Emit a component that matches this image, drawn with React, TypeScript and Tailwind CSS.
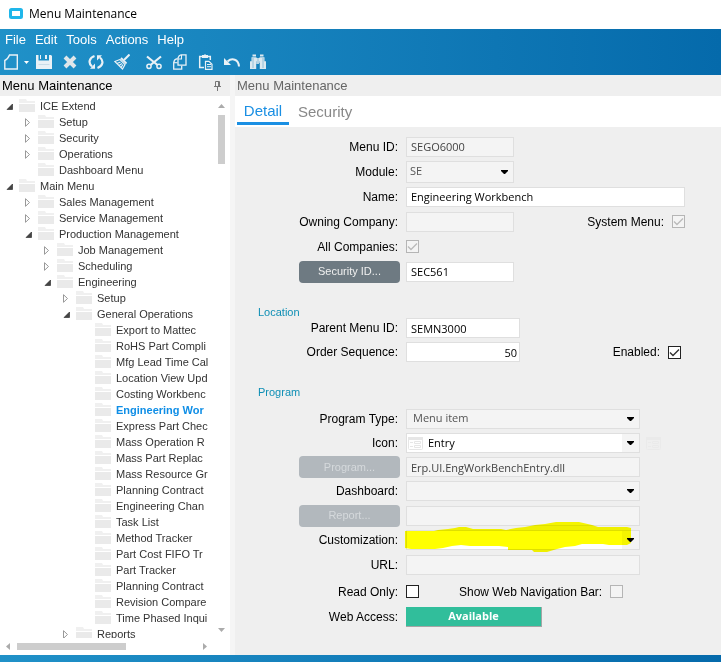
import { useState, type ReactNode } from "react";

type TreeNode = {
  label: string;
  level: number;
  state?: "open" | "closed";
};

const TREE: TreeNode[] = [
  { label: "ICE Extend", level: 0, state: "open" },
  { label: "Setup", level: 1, state: "closed" },
  { label: "Security", level: 1, state: "closed" },
  { label: "Operations", level: 1, state: "closed" },
  { label: "Dashboard Menu", level: 1 },
  { label: "Main Menu", level: 0, state: "open" },
  { label: "Sales Management", level: 1, state: "closed" },
  { label: "Service Management", level: 1, state: "closed" },
  { label: "Production Management", level: 1, state: "open" },
  { label: "Job Management", level: 2, state: "closed" },
  { label: "Scheduling", level: 2, state: "closed" },
  { label: "Engineering", level: 2, state: "open" },
  { label: "Setup", level: 3, state: "closed" },
  { label: "General Operations", level: 3, state: "open" },
  { label: "Export to Mattec", level: 4 },
  { label: "RoHS Part Compli", level: 4 },
  { label: "Mfg Lead Time Cal", level: 4 },
  { label: "Location View Upd", level: 4 },
  { label: "Costing Workbenc", level: 4 },
  { label: "Engineering Wor", level: 4 },
  { label: "Express Part Chec", level: 4 },
  { label: "Mass Operation R", level: 4 },
  { label: "Mass Part Replac", level: 4 },
  { label: "Mass Resource Gr", level: 4 },
  { label: "Planning Contract", level: 4 },
  { label: "Engineering Chan", level: 4 },
  { label: "Task List", level: 4 },
  { label: "Method Tracker", level: 4 },
  { label: "Part Cost FIFO Tr", level: 4 },
  { label: "Part Tracker", level: 4 },
  { label: "Planning Contract", level: 4 },
  { label: "Revision Compare", level: 4 },
  { label: "Time Phased Inqui", level: 4 },
  { label: "Reports", level: 3, state: "closed" },
];

const UI_FONT = "font-['Open_Sans','Noto_Sans',sans-serif]";

function Icon({ children }: { children: ReactNode }) {
  return (
    <svg width="16" height="16" viewBox="0 0 16 16" fill="none" stroke="#e9f1f6" strokeWidth="1.5">
      {children}
    </svg>
  );
}

const TOOLS: { name: string; icon: ReactNode }[] = [
  {
    name: "Save",
    icon: (
      <Icon>
        <path d="M0 1h2.500v5.500h10.500V1h2L16 2v13H0z" fill="#e9f1f6" stroke="none" />
        <path d="M4 1h1v4H4zM9 1h2v4H9z" fill="#e9f1f6" stroke="none" />
        <path d="M2.500 10.500h11" stroke="#c9dce8" strokeWidth="1" />
      </Icon>
    ),
  },
  {
    name: "Delete",
    icon: (
      <Icon>
        <path d="M3 3l10 10M13 3L3 13" strokeWidth="4" stroke="#dfe6ea" />
      </Icon>
    ),
  },
  {
    name: "Refresh",
    icon: (
      <Icon>
        <path d="M6.500 2C1 4 0 9 4 12.500" strokeWidth="2.200" />
        <path d="M9.500 14C15 12 16 7 12 3.500" strokeWidth="2.200" />
        <path d="M2 14.800h5V9.500z M14 1.200H9v5.300z" fill="#e9f1f6" stroke="none" />
      </Icon>
    ),
  },
  {
    name: "Clear",
    icon: (
      <Icon>
        <path d="M15.500 0.500L10 6" strokeWidth="2" />
        <path d="M7 4l5.500 5.500" strokeWidth="1.800" />
        <path d="M6 5.500L0.800 7.500l7.700 7.500L11 10.500z" strokeWidth="1.200" />
        <path d="M3 9.500l3.500-1.500M5 11.500l3-2M7 13.500l2-3" strokeWidth="1.200" />
      </Icon>
    ),
  },
  {
    name: "Cut",
    icon: (
      <Icon>
        <path d="M1 2.500L11.500 11M15 2.500L4.500 11" strokeWidth="2.200" />
        <circle cx="3" cy="12.300" r="2.100" />
        <circle cx="13" cy="12.300" r="2.100" />
      </Icon>
    ),
  },
  {
    name: "Copy",
    icon: (
      <Icon>
        <path d="M9 0.800h5v10.400H6V4C6.500 2.500 7.500 1 9 0.800z" strokeWidth="1.300" />
        <path d="M9.500 1v4H6" strokeWidth="1.100" />
        <path d="M5.500 4.700C3.500 5 2 6.500 1.700 8.500v6.700h8v-3.500" strokeWidth="1.300" />
        <path d="M2 8.700h3.500" strokeWidth="1.100" />
      </Icon>
    ),
  },
  {
    name: "Paste",
    icon: (
      <Icon>
        <path d="M6 13.500H1.700v-11h10.600V6" />
        <path d="M4 1h2l1-1 1 1h2v3H4z" fill="#e9f1f6" stroke="none" />
        <path d="M7.500 7.300h3.500l3 3v5H7.500z" strokeWidth="1.200" />
        <path d="M9 10.500h4M9 12.700h4" strokeWidth="1" />
      </Icon>
    ),
  },
  {
    name: "Undo",
    icon: (
      <Icon>
        <path d="M3.500 7.500C8 3.500 14.500 5 15 12.500" strokeWidth="2" />
        <path d="M0 4v7h7z" fill="#e9f1f6" stroke="none" />
      </Icon>
    ),
  },
  {
    name: "Search",
    icon: (
      <Icon>
        <path
          d="M2.500 0.500h3.500v2H2.500z M10 0.500h3.500v2H10z M1.500 3.300h5v4h-5z M9.500 3.300h5v4h-5z M0 7.300h6.200V15H0z M9.800 7.300H16V15H9.800z M6.500 4h3v6h-3z"
          fill="#dde9f0"
          stroke="none"
        />
        <path d="M3 4v10M8 4v6M13 4v10" stroke="#7fb3d1" strokeWidth="0.800" />
      </Icon>
    ),
  },
];

function Toolbar() {
  return (
    <div className="flex h-[22px] items-center">
      <button type="button" aria-label="New" className="flex w-[22px] justify-center">
        <svg width="14" height="16" viewBox="0 0 14 16" fill="none" stroke="#e9f1f6" strokeWidth="1.400">
          <path d="M5.500 1h7.800v14H0.800V6.500C2.500 5.800 4.500 3.500 5.500 1z" />
        </svg>
      </button>
      <button type="button" aria-label="New options" className="flex w-[9px] justify-center">
        <svg width="5" height="3" viewBox="0 0 5 3" fill="#fff">
          <path d="M0 0h5L2.500 3z" />
        </svg>
      </button>
      {TOOLS.map((tool) => (
        <button
          key={tool.name}
          type="button"
          aria-label={tool.name}
          className={tool.name === "Cut" ? "ml-1.5 flex w-[26px] justify-center" : "flex w-[26px] justify-center"}
        >
          {tool.icon}
        </button>
      ))}
    </div>
  );
}

function TreeRow({ node, selected, onSelect }: { node: TreeNode; selected: boolean; onSelect: () => void }) {
  return (
    <li className="flex h-4 items-center" style={{ paddingLeft: 6 + node.level * 19 }}>
      <svg width="13" height="9" viewBox="0 0 13 9" className="shrink-0">
        {node.state === "open" && <path d="M6.500 2v5.500H1z" fill="#444" stroke="#222" strokeWidth="0.600" />}
        {node.state === "closed" && <path d="M0.500 0.700v7.600l4-3.800z" fill="none" stroke="#999" />}
      </svg>
      <svg width="16" height="14" viewBox="0 0 16 14" className="shrink-0">
        <path d="M0 0h7l1 2h8v2H0z" fill="#f0f0f0" />
        <path d="M0 5h16v8H0z" fill="#eaeaea" />
      </svg>
      <button
        type="button"
        onClick={onSelect}
        className={
          selected
            ? "ml-[5px] text-[11px] leading-4 font-bold whitespace-nowrap text-[#0f8ee6]"
            : "ml-[5px] text-[11px] leading-4 whitespace-nowrap text-[#333]"
        }
      >
        {node.label}
      </button>
    </li>
  );
}

function TreePanel() {
  const [selected, setSelected] = useState(19);

  return (
    <aside className="flex w-[230px] shrink-0 flex-col bg-white">
      <header className="flex h-[21px] shrink-0 items-center justify-between bg-[#efefef] pr-2 pl-0.5">
        <h2 className="text-[13px] text-black">Menu Maintenance</h2>
        <button type="button" aria-label="Pin panel">
          <svg width="9" height="10" viewBox="0 0 9 10" fill="none" stroke="#777">
            <path d="M2.500 5.500v-5h4v5M5.500 0.500v5M1 5.500h7M4.500 6v4" />
          </svg>
        </button>
      </header>

      <div className="flex min-h-0 flex-1">
        <ul className="min-w-0 flex-1 overflow-hidden pt-0.5">
          {TREE.map((node, i) => (
            <TreeRow key={i} node={node} selected={i === selected} onSelect={() => setSelected(i)} />
          ))}
        </ul>
        {/* Vertical scrollbar */}
        <div className="flex w-4 shrink-0 flex-col items-center pt-2 pr-0.5 pb-[6px]">
          <svg width="7" height="4" viewBox="0 0 7 4" fill="#ababab">
            <path d="M0 4h7L3.500 0z" />
          </svg>
          <div className="mt-[7px] h-[49px] w-[7px] bg-[#cdcdcd]" />
          <svg width="7" height="4" viewBox="0 0 7 4" fill="#ababab" className="mt-auto">
            <path d="M0 0h7L3.500 4z" />
          </svg>
        </div>
      </div>

      {/* Horizontal scrollbar */}
      <div className="flex h-[17px] shrink-0 items-center pr-[23px] pl-1.5">
        <svg width="4" height="7" viewBox="0 0 4 7" fill="#ababab">
          <path d="M4 0v7L0 3.500z" />
        </svg>
        <div className="ml-[7px] h-[7px] w-[109px] bg-[#cdcdcd]" />
        <svg width="4" height="7" viewBox="0 0 4 7" fill="#ababab" className="ml-auto">
          <path d="M0 0v7l4-3.500z" />
        </svg>
      </div>
    </aside>
  );
}

function Row({ label, htmlFor, tall, children }: { label: ReactNode; htmlFor?: string; tall?: boolean; children: ReactNode }) {
  return (
    <div className={tall ? "flex h-[25px] items-center" : "flex h-6 items-center"}>
      {htmlFor ? (
        <label htmlFor={htmlFor} className="mr-2 w-[163px] shrink-0 text-right text-xs text-black">
          {label}
        </label>
      ) : (
        <div className="mr-1.5 flex w-[165px] shrink-0 justify-end">{label}</div>
      )}
      {children}
    </div>
  );
}

function TextField({ id, value = "", disabled, label, className }: { id: string; value?: string; disabled?: boolean; label?: string; className: string }) {
  return (
    <input
      id={id}
      type="text"
      aria-label={label}
      defaultValue={value}
      disabled={disabled}
      className={`h-5 border border-[#dfdfdf] text-[11px] ${UI_FONT} ${
        disabled ? "bg-[#f4f4f4] text-[#444]" : "bg-white text-black"
      } ${className}`}
    />
  );
}

function SelectField({ id, value = "", disabled, className, children }: { id: string; value?: string; disabled?: boolean; className: string; children?: ReactNode }) {
  return (
    <div className="relative">
      <select
        id={id}
        disabled={disabled}
        className={`block appearance-none border border-[#dfdfdf] text-[11px] opacity-100 ${UI_FONT} ${
          disabled ? "bg-[#f4f4f4] text-[#555]" : "bg-white text-black"
        } ${className}`}
      >
        <option>{value}</option>
      </select>
      {!disabled && <span className="pointer-events-none absolute inset-y-px right-px w-[17px] bg-[#f4f4f4]" />}
      {children}
      <svg
        width="7"
        height="4"
        viewBox="0 0 7 4"
        className="pointer-events-none absolute top-1/2 right-1.5 -translate-y-1/2"
      >
        <path d="M0 0h7v1L4 4H3L0 1z" />
      </svg>
    </div>
  );
}

function CheckBox({ id, checked, disabled }: { id: string; checked?: boolean; disabled?: boolean }) {
  return (
    <span className="grid size-[13px] shrink-0">
      <input
        id={id}
        type="checkbox"
        defaultChecked={checked}
        disabled={disabled}
        className="peer col-start-1 row-start-1 size-[13px] appearance-none border border-[#222] bg-white disabled:border-[#b5b5b5] disabled:bg-[#f4f4f4]"
      />
      <svg
        viewBox="0 0 13 13"
        fill="none"
        className="pointer-events-none invisible col-start-1 row-start-1 size-[13px] stroke-[#333] peer-checked:visible peer-disabled:stroke-[#bbb]"
      >
        <path d="M2 6.500l3 3 6-6" strokeWidth="1.400" />
      </svg>
    </span>
  );
}

function FormIcon({ className }: { className: string }) {
  return (
    <svg width="15" height="13" viewBox="0 0 15 13" className={className}>
      <rect x="0.500" y="0.500" width="14" height="12" rx="1" fill="none" stroke="currentColor" />
      <path d="M0 0h15v3H0z" fill="currentColor" />
      <path d="M2 5.500h3M2 9.500h3M6.500 4.500h6v2h-6zM6.500 8.500h6v2h-6z" fill="none" stroke="currentColor" />
    </svg>
  );
}

function ActionButton({ disabled, children }: { disabled?: boolean; children: ReactNode }) {
  return (
    <button
      type="button"
      disabled={disabled}
      className="h-[22px] w-[101px] rounded bg-[#6e7a82] text-[11px] text-[#f0f0f0] disabled:bg-[#b2b8bd] disabled:text-[#d5d9dc]"
    >
      {children}
    </button>
  );
}

function DetailForm() {
  return (
    <form className="flex-1 pt-[7px]">
      <Row tall label="Menu ID:" htmlFor="menu-id">
        <TextField id="menu-id" value="SEGO6000" disabled className="w-[108px] px-1" />
      </Row>
      <Row tall label="Module:" htmlFor="module">
        <SelectField id="module" value="SE" disabled className="h-[22px] w-[108px] px-[3px]" />
      </Row>
      <Row tall label="Name:" htmlFor="name">
        <TextField id="name" value="Engineering Workbench" className="mr-9 min-w-0 flex-1 px-1" />
      </Row>
      <Row tall label="Owning Company:" htmlFor="company">
        <TextField id="company" disabled className="w-[108px] px-1" />
        <label htmlFor="system-menu" className="mr-2 ml-auto text-xs text-black">
          System Menu:
        </label>
        <div className="mr-9 flex">
          <CheckBox id="system-menu" checked disabled />
        </div>
      </Row>
      <Row tall label="All Companies:" htmlFor="all-companies">
        <CheckBox id="all-companies" checked disabled />
      </Row>
      <Row tall label={<ActionButton>Security ID...</ActionButton>}>
        <TextField id="security-id" label="Security ID" value="SEC561" className="w-[108px] px-1" />
      </Row>

      <h3 className="mt-[22px] -mb-0.5 ml-[23px] text-[11px] leading-3 text-[#0f8fb5]">Location</h3>
      <Row label="Parent Menu ID:" htmlFor="parent-id">
        <TextField id="parent-id" value="SEMN3000" className="w-[114px] px-1" />
      </Row>
      <Row label="Order Sequence:" htmlFor="order">
        <TextField id="order" value="50" className="w-[114px] px-0.5 text-right" />
        <label htmlFor="enabled" className="mr-2 ml-auto text-xs text-black">
          Enabled:
        </label>
        <div className="mr-10 flex">
          <CheckBox id="enabled" checked />
        </div>
      </Row>

      <h3 className="mt-[22px] mb-2 ml-[23px] text-[11px] leading-3 text-[#0f8fb5]">Program</h3>
      <Row tall label="Program Type:" htmlFor="program-type">
        <SelectField id="program-type" value="Menu item" disabled className="h-5 w-[234px] px-1.5" />
      </Row>
      <Row label="Icon:" htmlFor="icon">
        <SelectField id="icon" value="Entry" className="h-5 w-[234px] pl-[21px]">
          <FormIcon className="pointer-events-none absolute top-1 left-0.5 text-[#e6e6e6]" />
        </SelectField>
        <FormIcon className="ml-1.5 text-[#eaeaea]" />
      </Row>
      <Row label={<ActionButton disabled>Program...</ActionButton>}>
        <TextField id="program" label="Program" value="Erp.UI.EngWorkBenchEntry.dll" disabled className="w-[234px] px-1" />
      </Row>
      <Row label="Dashboard:" htmlFor="dashboard">
        <SelectField id="dashboard" disabled className="h-5 w-[234px]" />
      </Row>
      <Row tall label={<ActionButton disabled>Report...</ActionButton>}>
        <TextField id="report" label="Report" disabled className="w-[234px] px-1" />
      </Row>
      <Row label="Customization:" htmlFor="customization">
        <SelectField id="customization" className="h-5 w-[234px]">
          {/* Marker stroke over the value */}
          <svg
            width="227"
            height="32"
            viewBox="0 0 227 32"
            className="pointer-events-none absolute -top-[9px] -left-px mix-blend-multiply"
          >
            <path
              d="M0 10H29L33 9L43 8L50 7L54 6H61L68 8H96L101 9L111 7L120 6L130 4L140 3L151 1H174L187 4L193 6H222L226 7V22L222 24H204L198 23H177L170 25L160 26L152 28L142 31H129L127 29H103V26L94 25H65L56 24L47 25L38 27L30 28H6L0 27Z"
              fill="#ffff00"
            />
          </svg>
        </SelectField>
      </Row>
      <Row tall label="URL:" htmlFor="url">
        <TextField id="url" disabled className="w-[234px] px-1" />
      </Row>

      <div className="mt-0.5">
        <Row tall label="Read Only:" htmlFor="read-only">
          <CheckBox id="read-only" />
          <label htmlFor="nav-bar" className="mr-2 ml-10 text-xs whitespace-nowrap text-black">
            Show Web Navigation Bar:
          </label>
          <CheckBox id="nav-bar" disabled />
        </Row>
        <Row tall label="Web Access:" htmlFor="web-access">
          <button
            id="web-access"
            type="button"
            className={`h-5 w-[136px] border-r border-b border-[#a5a5a5] bg-[#31be9b] text-[11px] font-bold text-white ${UI_FONT}`}
          >
            Available
          </button>
        </Row>
      </div>
    </form>
  );
}

export default function App() {
  return (
    <div className="flex h-screen flex-col overflow-hidden bg-white font-['Liberation_Sans',Arial,sans-serif]">
      <div className="flex h-[29px] shrink-0 items-center gap-1.5 pb-0.5 pl-[9px]">
        <svg width="14" height="11" viewBox="0 0 14 11" fill="none">
          <rect x="1.500" y="1.500" width="11" height="8" rx="1" stroke="#1fb6ea" strokeWidth="3" />
        </svg>
        <h1 className={`text-xs text-black ${UI_FONT}`}>Menu Maintenance</h1>
      </div>

      <div className="h-[46px] shrink-0 bg-linear-to-r from-[#2091c8] to-[#056aab]">
        <nav className="flex h-[22px] items-center gap-[9px] pl-[5px] text-[13px] text-white">
          <button type="button">File</button>
          <button type="button">Edit</button>
          <button type="button">Tools</button>
          <button type="button">Actions</button>
          <button type="button">Help</button>
        </nav>
        <Toolbar />
      </div>

      <div className="flex min-h-0 flex-1">
        <TreePanel />
        <div className="w-[5px] shrink-0 bg-[#f5f5f5]" />
        <main className="flex min-w-0 flex-1 flex-col bg-[#efefef]">
          <h2 className="flex h-[21px] shrink-0 items-center pl-0.5 text-[13px] text-[#666]">Menu Maintenance</h2>
          <div role="tablist" className="flex h-[31px] shrink-0 items-start gap-[9px] bg-white pl-0.5 text-[15px]">
            <button
              type="button"
              role="tab"
              aria-selected="true"
              className="h-[29px] w-[52px] border-b-3 border-[#1a8fe3] pt-1 text-[#1a8fe3]"
            >
              Detail
            </button>
            <button type="button" role="tab" aria-selected="false" className="h-[29px] pt-1 text-[#888]">
              Security
            </button>
          </div>
          <DetailForm />
        </main>
      </div>

      <footer className="h-[7px] shrink-0 bg-linear-to-r from-[#2091c8] to-[#056aab]" />
    </div>
  );
}
